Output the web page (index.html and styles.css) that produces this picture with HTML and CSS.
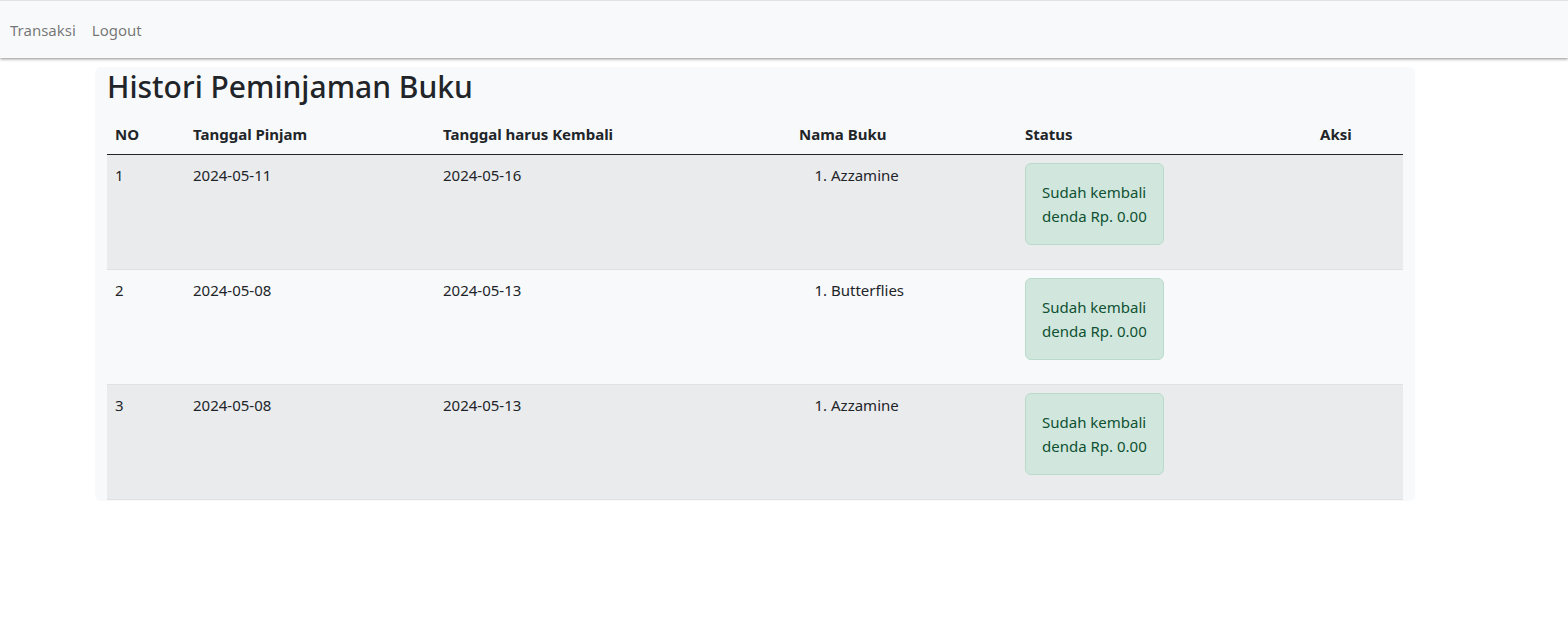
FILE: index.html
```html
<!DOCTYPE html>
<html lang="id">
<head>
<meta charset="utf-8">
<title>Histori Peminjaman Buku</title>
<link rel="stylesheet" href="styles.css">
</head>
<body>
<nav class="navbar">
  <a class="nav-link" href="#">Transaksi</a>
  <a class="nav-link" href="#">Logout</a>
</nav>
<main class="panel">
  <h1 class="title">Histori Peminjaman Buku</h1>
  <table class="history">
    <colgroup>
      <col class="c-no"><col class="c-pinjam"><col class="c-kembali"><col class="c-buku"><col class="c-status"><col class="c-aksi">
    </colgroup>
    <thead>
      <tr><th>NO</th><th>Tanggal Pinjam</th><th>Tanggal harus Kembali</th><th>Nama Buku</th><th>Status</th><th class="aksi">Aksi</th></tr>
    </thead>
    <tbody>
      <tr class="odd">
        <td>1</td><td>2024-05-11</td><td>2024-05-16</td>
        <td><ol class="books"><li>Azzamine</li></ol></td>
        <td><div class="alert">Sudah kembali<br>denda Rp. 0.00</div></td>
        <td></td>
      </tr>
      <tr>
        <td>2</td><td>2024-05-08</td><td>2024-05-13</td>
        <td><ol class="books"><li>Butterflies</li></ol></td>
        <td><div class="alert">Sudah kembali<br>denda Rp. 0.00</div></td>
        <td></td>
      </tr>
      <tr class="odd">
        <td>3</td><td>2024-05-08</td><td>2024-05-13</td>
        <td><ol class="books"><li>Azzamine</li></ol></td>
        <td><div class="alert">Sudah kembali<br>denda Rp. 0.00</div></td>
        <td></td>
      </tr>
    </tbody>
  </table>
</main>
</body>
</html>
```
FILE: styles.css
```css
html, body {
  margin: 0;
  padding: 0;
  background: #ffffff;
  font-family: "Noto Sans", "Open Sans", sans-serif;
  font-size: 15px;
  line-height: 24px;
  color: #212529;
}

.navbar {
  display: flex;
  align-items: center;
  height: 57px;
  padding: 0 2px;
  background: #f8f9fa;
  border-top: 1px solid #dee2e6;
  box-shadow: 0 1px 3px rgba(0, 0, 0, 0.45);
}

.nav-link {
  padding: 8px 8px;
  color: rgba(0, 0, 0, 0.55);
  text-decoration: none;
}

.panel {
  width: 1296px;
  margin: 9px 0 0 95px;
  padding: 0 12px 1px;
  background: #f8f9fa;
  border-radius: 6px;
}

.title {
  margin: 0 0 8px;
  padding-top: 1px;
  font-size: 30px;
  line-height: 38px;
  font-weight: 500;
  color: #212529;
}

.history {
  width: 1296px;
  border-collapse: collapse;
  table-layout: fixed;
}

.c-no { width: 78px; }
.c-pinjam { width: 250px; }
.c-kembali { width: 356px; }
.c-buku { width: 226px; }
.c-status { width: 295px; }
.c-aksi { width: 91px; }

.history th {
  padding: 8px;
  text-align: left;
  font-weight: 700;
  border-bottom: 1px solid #212529;
}

.history td {
  padding: 8px;
  vertical-align: top;
  border-bottom: 1px solid #dee2e6;
}

.history tr.odd td {
  background: #eaebed;
}

.books {
  margin: 0;
  padding-left: 32px;
}

.alert {
  display: inline-block;
  padding: 16px;
  margin-bottom: 16px;
  background: #d1e7dd;
  border: 1px solid #badbcc;
  border-radius: 6px;
  color: #0f5132;
}
```
